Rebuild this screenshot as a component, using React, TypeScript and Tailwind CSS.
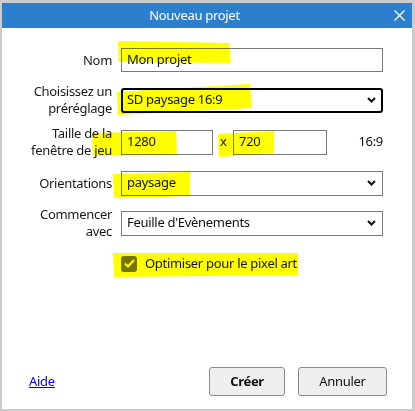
import React from 'react';

const font = { fontFamily: '"Noto Sans", "Open Sans", Arial, sans-serif' };

const Chevron = () => (
  <svg width="9" height="6" viewBox="0 0 9 6" className="shrink-0">
    <path d="M1 1 L4.5 4.5 L8 1" fill="none" stroke="#111" strokeWidth="2" />
  </svg>
);

const Select = ({ value, focused }: { value: string; focused?: boolean }) => (
  <div
    className={`flex items-center justify-between flex-1 h-[25px] bg-white ${
      focused ? 'border-2 border-black rounded-[3px] pl-[4px] pr-[5px]' : 'border border-[#7a7a7a] pl-[5px] pr-[6px]'
    }`}
  >
    <span className="text-[13px] text-[#111]">{value}</span>
    <Chevron />
  </div>
);

const Label = ({ children }: { children: React.ReactNode }) => (
  <div className="w-[110px] shrink-0 text-right text-[13px] leading-[17px] text-[#1a1a1a]">
    {children}
  </div>
);

const Highlights = () => (
  <svg
    className="absolute inset-0 pointer-events-none mix-blend-multiply"
    width="415"
    height="411"
    viewBox="0 0 415 411"
  >
    <g fill="#ffff00">
      <path d="M118 41 L229 43 L231 63 L119 62 Z" />
      <path d="M117 92 L250 84 L252 108 L118 115 Z" />
      <path d="M92 133 L176 131 L177 155 L93 156 Z" />
      <path d="M218 134 L274 131 L274 153 L219 157 Z" />
      <path d="M113 174 L190 172 L190 196 L114 198 Z" />
      <path d="M113 253 L298 253 L298 275 L114 277 Z" />
    </g>
  </svg>
);

export default function App() {
  return (
    <div
      className="relative w-[415px] h-[411px] bg-[#cbcbcb] pt-[3px] pl-[2px] pr-[3px] pb-[2px] flex flex-col tracking-[-0.3px]"
      style={font}
    >
      <div className="h-[25px] bg-[#2b7fcd] flex items-center shrink-0">
        <div className="flex-1 text-center text-white text-[13px]">Nouveau projet</div>
        <div className="w-[25px] flex justify-center">
          <svg width="11" height="11" viewBox="0 0 11 11">
            <path d="M0.5 0.5 L10.5 10.5 M10.5 0.5 L0.5 10.5" stroke="#fff" strokeWidth="1.3" />
          </svg>
        </div>
      </div>

      <div className="flex-1 bg-white flex flex-col pr-[29px]">
        <div className="mt-[20px] h-[24px] flex items-center gap-[9px]">
          <Label>Nom</Label>
          <div className="flex-1 h-[24px] border border-[#7a7a7a] flex items-center pl-[5px] text-[13px] text-[#111]">
            Mon projet
          </div>
        </div>

        <div className="mt-[11px] h-[34px] flex items-center gap-[9px]">
          <Label>
            Choisissez un
            <br />
            préréglage
          </Label>
          <Select value="SD paysage 16:9" focused />
        </div>

        <div className="mt-[8px] h-[34px] flex items-center">
          <Label>
            Taille de la
            <br />
            fenêtre de jeu
          </Label>
          <div className="ml-[9px] w-[92px] h-[25px] border border-[#7a7a7a] flex items-center pl-[5px] text-[13px] text-[#111]">
            1280
          </div>
          <span className="ml-[7px] w-[7px] text-[13px] text-[#111]">x</span>
          <div className="ml-[6px] w-[94px] h-[25px] border border-[#7a7a7a] flex items-center pl-[5px] text-[13px] text-[#111]">
            720
          </div>
          <span className="flex-1 text-right text-[13px] text-[#111]">16:9</span>
        </div>

        <div className="mt-[11px] h-[26px] flex items-center gap-[9px]">
          <Label>Orientations</Label>
          <Select value="paysage" />
        </div>

        <div className="mt-[10px] h-[34px] flex items-center gap-[9px]">
          <Label>
            Commencer
            <br />
            avec
          </Label>
          <Select value="Feuille d'Evènements" />
        </div>

        <div className="mt-[14px] pl-[119px] flex items-center gap-[8px]">
          <div className="w-[16px] h-[16px] rounded-[3px] bg-[#777474] flex items-center justify-center">
            <svg width="11" height="9" viewBox="0 0 11 9">
              <path d="M1 4.5 L4 7.5 L10 1" fill="none" stroke="#fff" strokeWidth="2" />
            </svg>
          </div>
          <span className="text-[13px] text-[#111]">Optimiser pour le pixel art</span>
        </div>

        <div className="mt-auto mb-[13px] -mr-[4px] flex items-center pl-[27px]">
          <a className="text-[13px] text-[#0000ee] underline">Aide</a>
          <div className="ml-auto flex gap-[13px]">
            <button className="w-[76px] h-[29px] rounded-[3px] border border-[#8a8a8a] bg-[#efefef] text-[13px] font-bold text-[#111]">
              Créer
            </button>
            <button className="w-[89px] h-[29px] rounded-[3px] border border-[#8a8a8a] bg-[#efefef] text-[13px] text-[#111]">
              Annuler
            </button>
          </div>
        </div>
      </div>

      <Highlights />
    </div>
  );
}
